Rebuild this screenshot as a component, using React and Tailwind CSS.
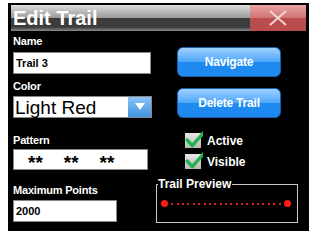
import React from 'react';

const font = { fontFamily: '"Liberation Sans", Arial, sans-serif' };

function Label({ children, className = '' }) {
  return (
    <div className={`h-[11px] text-[11px] font-bold leading-[11px] text-white tracking-[-0.2px] ${className}`}>{children}</div>
  );
}

function GlossButton({ children, className = '' }) {
  return (
    <div className={`relative flex h-[30px] w-[104px] items-center justify-center overflow-hidden rounded-[6px] border border-[#1b5fa8] bg-[#1e8af0] ${className}`}>
      <div className="absolute inset-x-0 top-0 h-1/2 bg-gradient-to-b from-[#9fd0ff] to-[#4aa6fb]" />
      <span className="relative text-[12px] font-bold text-white tracking-[-0.2px]">{children}</span>
    </div>
  );
}

function Check({ label }) {
  return (
    <div className="flex h-[15px] items-center gap-[6px]">
      <div className="relative h-[15px] w-[16px] bg-gradient-to-b from-[#e8e8e8] to-[#b8b8b8]">
        <svg viewBox="0 0 16 15" className="absolute -top-[2px] left-0 h-[17px] w-[18px]">
          <path d="M2 8 L6.5 13 L17 1" fill="none" stroke="#22b14c" strokeWidth="3" strokeLinecap="round" strokeLinejoin="round" />
        </svg>
      </div>
      <span className="text-[12px] font-bold text-white">{label}</span>
    </div>
  );
}

export default function App() {
  const dots = Array.from({ length: 21 });
  return (
    <div style={font} className="h-[231px] w-[309px] bg-white pl-[8px] pt-[3px]">
      <div className="h-[228px] w-[301px] bg-black pl-[3px] pr-[3px] pt-[2px]">
        {/* title bar */}
        <div className="flex h-[26px] w-[295px]">
          <div className="relative flex flex-1 items-center overflow-hidden bg-[#3c3c3c]">
            <div className="absolute inset-x-0 top-0 h-[13px] bg-gradient-to-b from-[#dcdcdc] to-[#9a9a9a]" />
            <div className="absolute inset-x-0 bottom-0 h-[4px] bg-gradient-to-b from-[#3c3c3c] to-[#8c8c8c]" />
            <span className="relative pl-[2px] text-[20px] font-bold text-white">Edit Trail</span>
          </div>
          <div className="relative flex w-[56px] items-center justify-center overflow-hidden bg-[#b94c4c]">
            <div className="absolute inset-x-0 top-0 h-[13px] bg-gradient-to-b from-[#e8a4a4] to-[#d07272]" />
            <svg viewBox="0 0 20 16" className="relative h-[16px] w-[20px]">
              <path d="M2 1 L18 15 M18 1 L2 15" stroke="#f6d4d4" strokeWidth="2" />
            </svg>
          </div>
        </div>

        <div className="flex">
          {/* left column */}
          <div className="flex w-[148px] flex-col pl-[2px]">
            <Label className="mt-[5px]">Name</Label>
            <div className="mt-[5px] flex h-[22px] w-[138px] items-center border border-[#888] bg-white px-[2px] text-[11px] font-bold text-black">Trail 3</div>
            <Label className="mt-[7px]">Color</Label>
            <div className="mt-[4px] flex h-[22px] w-[139px] items-center border border-[#888] bg-white">
              <span className="flex-1 pl-[1px] text-[19px] leading-none text-black">Light Red</span>
              <div className="flex h-full w-[23px] items-center justify-center bg-gradient-to-b from-[#8cc4f4] to-[#3d92e0]">
                <svg viewBox="0 0 10 8" className="h-[8px] w-[10px]"><path d="M0 0 L10 0 L5 7 Z" fill="white" /></svg>
              </div>
            </div>
            <Label className="mt-[17px]">Pattern</Label>
            <div className="mt-[3px] flex h-[21px] w-[135px] items-center gap-[21px] border border-[#888] bg-white pl-[14px] text-[19px] font-bold leading-none text-black">
              <span className="pt-[6px]">**</span><span className="pt-[6px]">**</span><span className="pt-[6px]">**</span>
            </div>
            <Label className="mt-[15px]">Maximum Points</Label>
            <div className="mt-[4px] flex h-[22px] w-[104px] items-center border border-[#888] bg-white px-[2px] text-[11px] font-bold text-black">2000</div>
          </div>

          {/* right column */}
          <div className="flex flex-1 flex-col">
            <GlossButton className="ml-[18px] mt-[16px]">Navigate</GlossButton>
            <GlossButton className="ml-[18px] mt-[11px]">Delete Trail</GlossButton>
            <div className="ml-[26px] mt-[15px] flex flex-col gap-[6px]">
              <Check label="Active" />
              <Check label="Visible" />
            </div>
            <div className="relative -ml-[3px] mt-[15px] h-[39px] w-[142px] border border-[#c8c8c8]">
              <span className="absolute -top-[7px] left-[1px] bg-black pr-[1px] text-[12px] font-bold leading-none text-white">Trail Preview</span>
              <div className="absolute left-[4px] right-[6px] top-[15px] flex items-center justify-between">
                <div className="h-[7px] w-[7px] rounded-full bg-[#ff1a1a]" />
                {dots.map((_, i) => (
                  <div key={i} className="h-[2px] w-[2px] bg-[#e02020]" />
                ))}
                <div className="h-[7px] w-[7px] rounded-full bg-[#ff1a1a]" />
              </div>
            </div>
          </div>
        </div>
      </div>
    </div>
  );
}
